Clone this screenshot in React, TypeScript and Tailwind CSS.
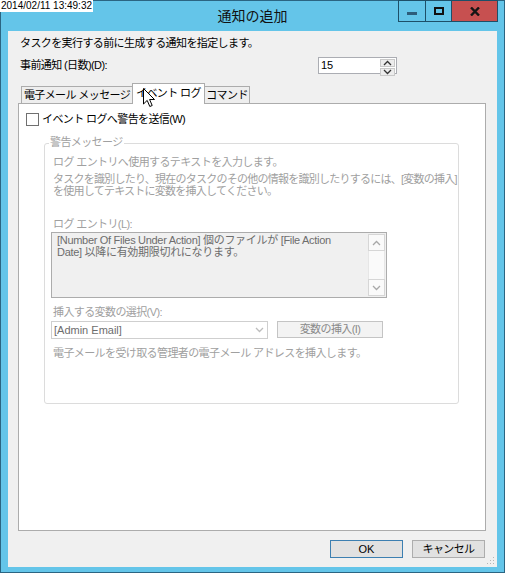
import React from 'react';

const Chevron = ({ up, className }: { up?: boolean; className?: string }) => (
  <svg width="9" height="6" viewBox="0 0 9 6" className={className}>
    <polyline
      points={up ? '1,5 4.5,1.5 8,5' : '1,1 4.5,4.5 8,1'}
      fill="none"
      stroke="currentColor"
      strokeWidth="1.3"
    />
  </svg>
);

const App: React.FC = () => {
  return (
    <div className="relative w-[505px] h-[573px] bg-[#64c5e9] border border-[#2b6582] flex flex-col font-['Liberation_Sans','Noto_Sans_CJK_JP',sans-serif] text-[11px] tracking-[-0.6px] text-black">
      {/* title bar */}
      <div className="h-[30px] shrink-0 grid grid-cols-[1fr_auto_1fr]">
        <div />
        <div className="text-[14px] tracking-normal leading-[30px] text-[#111]">通知の追加</div>
        <div className="flex justify-end items-start pr-[6px] -mt-px">
          <div className="w-[28px] h-[22px] border border-[#1d4f68] flex items-center justify-center">
            <div className="w-[10px] h-[3px] bg-[#2d5d7b] mt-[4px]" />
          </div>
          <div className="w-[26px] h-[22px] border border-l-0 border-[#1d4f68] flex items-center justify-center">
            <div className="w-[10px] h-[8px] border-2 border-[#111]" />
          </div>
          <div className="w-[46px] h-[22px] border border-l-0 border-[#1d4f68] bg-[#c75050] flex items-center justify-center">
            <svg width="10" height="9" viewBox="0 0 10 9">
              <path d="M1 0.5 L9 8.5 M9 0.5 L1 8.5" stroke="#151515" strokeWidth="2.4" />
            </svg>
          </div>
        </div>
      </div>

      {/* client area */}
      <div className="relative flex-1 mx-[7px] mb-[5px] bg-[#f0f0f0] flex flex-col pl-[10px] pr-[11px] pt-[5px]">
        <div className="ml-[2px] h-[14px] leading-[14px]">タスクを実行する前に生成する通知を指定します。</div>

        <div className="mt-[7px] ml-[2px] h-[17px] flex items-center">
          <div className="w-[298px] leading-[17px]">事前通知 (日数)(D):</div>
          <div className="w-[79px] h-[17px] bg-white border border-[#abadb3] flex">
            <div className="flex-1 pl-[2px] leading-[15px] tracking-normal">15</div>
            <div className="w-[16px] flex flex-col gap-px py-px pr-px">
              <div className="flex-1 bg-[#ececec] border border-[#c9c9c9] flex items-center justify-center text-[#333]">
                <Chevron up />
              </div>
              <div className="flex-1 bg-[#ececec] border border-[#c9c9c9] flex items-center justify-center text-[#333]">
                <Chevron />
              </div>
            </div>
          </div>
        </div>

        {/* tabs */}
        <div className="mt-[9px] h-[20px] flex items-end pl-[3px]">
          <div className="w-[111px] h-[17px] border border-r-0 border-b-0 border-[#acacac] bg-[#eeeeee] leading-[16px] text-center">
            電子メール メッセージ
          </div>
          <div className="relative z-10 w-[73px] h-[21px] -mb-px border border-b-0 border-[#acacac] bg-white leading-[18px] text-center">
            イベント ログ
          </div>
          <div className="w-[45px] h-[17px] border border-l-0 border-b-0 border-[#acacac] bg-[#eeeeee] leading-[16px] text-center">
            コマンド
          </div>
        </div>

        {/* tab panel */}
        <div className="flex-1 border border-[#acacac] bg-white flex flex-col pl-[7px] pt-[9px]">
          <div className="h-[13px] flex items-center gap-[3px]">
            <div className="w-[13px] h-[13px] border border-[#707070] bg-white" />
            <div className="leading-[13px]">イベント ログへ警告を送信(W)</div>
          </div>

          <div className="mt-[17px] ml-[18px] w-[415px] h-[261px] border border-[#dcdcdc] rounded-[3px] flex flex-col text-[#a0a0a0]">
            <div className="-mt-[8px] ml-[4px] self-start h-[12px] leading-[12px] px-px bg-white">警告メッセージ</div>
            <div className="mt-[8px] ml-[8px] h-[12px] leading-[12px]">ログ エントリへ使用するテキストを入力します。</div>
            <div className="mt-[5px] ml-[8px] leading-[12px] whitespace-nowrap tracking-[-0.75px]">
              タスクを識別したり、現在のタスクのその他の情報を識別したりするには、[変数の挿入]
              <br />
              を使用してテキストに変数を挿入してください。
            </div>
            <div className="mt-[21px] ml-[8px] h-[12px] leading-[12px]">ログ エントリ(L):</div>

            <div className="mt-[2px] ml-[6px] w-[336px] h-[66px] border border-[#acacac] bg-[#f0f0f0] flex">
              <div className="flex-1 pl-[5px] pt-px leading-[12px] text-[#6d6d6d] whitespace-nowrap tracking-[-0.3px]">
                [Number Of Files Under Action] 個のファイルが [File Action
                <br />
                Date] 以降に有効期限切れになります。
              </div>
              <div className="w-[17px] my-px mr-px bg-[#fafafa] flex flex-col text-[#a8a8a8]">
                <div className="h-[17px] border border-[#d6d6d6] flex items-center justify-center">
                  <Chevron up />
                </div>
                <div className="flex-1 border-x border-[#e6e6e6]" />
                <div className="h-[17px] border border-[#d6d6d6] flex items-center justify-center">
                  <Chevron />
                </div>
              </div>
            </div>

            <div className="mt-[8px] ml-[8px] h-[12px] leading-[12px]">挿入する変数の選択(V):</div>
            <div className="mt-[3px] ml-[6px] flex items-start gap-[9px]">
              <div className="w-[217px] h-[18px] border border-[#cfcfcf] bg-white flex items-center pl-[2px] pr-[3px] text-[#6d6d6d]">
                <div className="flex-1 leading-[16px] tracking-normal">[Admin Email]</div>
                <Chevron className="text-[#bdbdbd]" />
              </div>
              <div className="w-[106px] h-[17px] border border-[#c4c4c4] bg-[#f3f3f3] leading-[15px] text-center text-[#8a8a8a]">
                変数の挿入(I)
              </div>
            </div>
            <div className="mt-[8px] ml-[8px] h-[12px] leading-[12px]">
              電子メールを受け取る管理者の電子メール アドレスを挿入します。
            </div>
          </div>
        </div>

        {/* buttons */}
        <div className="mt-[9px] mb-[9px] h-[18px] flex justify-end gap-[9px] pr-px">
          <div className="w-[73px] h-[18px] border border-[#3c7fb1] bg-[#e1e1e1] leading-[16px] text-center tracking-normal">OK</div>
          <div className="w-[73px] h-[18px] border border-[#adadad] bg-[#e1e1e1] leading-[16px] text-center">キャンセル</div>
        </div>

        {/* size grip */}
        <svg className="absolute right-[2px] bottom-[2px]" width="8" height="8" viewBox="0 0 8 8">
          <rect x="6" y="0" width="1" height="1" fill="#b5b5b5" />
          <rect x="3" y="3" width="1" height="1" fill="#b5b5b5" />
          <rect x="6" y="3" width="1" height="1" fill="#b5b5b5" />
          <rect x="0" y="6" width="1" height="1" fill="#b5b5b5" />
          <rect x="3" y="6" width="1" height="1" fill="#b5b5b5" />
          <rect x="6" y="6" width="1" height="1" fill="#b5b5b5" />
        </svg>
      </div>

      {/* timestamp overlay */}
      <div className="absolute -left-px -top-px bg-white px-px h-[12px] leading-[12px] text-[10px] tracking-normal font-['Liberation_Sans',sans-serif] text-black">
        2014/02/11 13:49:32
      </div>

      {/* mouse cursor */}
      <svg className="absolute left-[142px] top-[87px] z-20" width="13" height="20" viewBox="0 0 13 20">
        <path d="M0.5 0.5 L0.5 16 L4.2 12.4 L6.8 18.5 L9.2 17.5 L6.6 11.5 L11.5 11.5 Z" fill="#fff" stroke="#000" strokeWidth="1" />
      </svg>
    </div>
  );
};

export default App;
